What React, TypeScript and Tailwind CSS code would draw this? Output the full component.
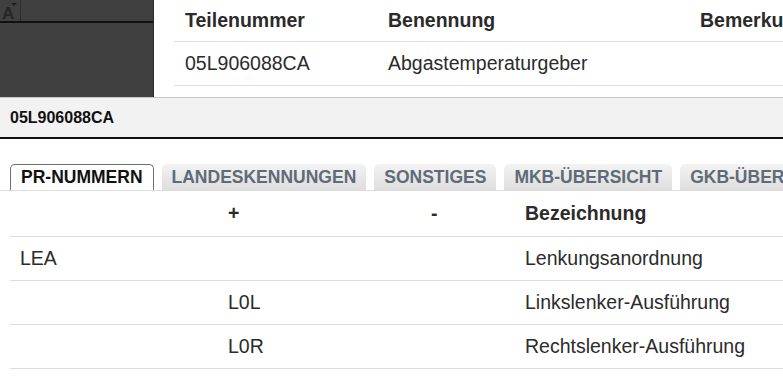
export default function App() {
  const tabs = ["LANDESKENNUNGEN", "SONSTIGES", "MKB-ÜBERSICHT", "GKB-ÜBERSICHT"];
  const rows = [
    { a: "LEA", b: "", c: "", d: "Lenkungsanordnung" },
    { a: "", b: "L0L", c: "", d: "Linkslenker-Ausführung" },
    { a: "", b: "L0R", c: "", d: "Rechtslenker-Ausführung" },
  ];

  return (
    <div className="w-[783px] h-[385px] overflow-hidden bg-white font-['Liberation_Sans',Arial,sans-serif] text-[#2b2b2b]">
      {/* top area */}
      <div className="flex h-[98px] border-b border-[#c8c8c8]">
        <div className="w-[154px] shrink-0 bg-[#404040] border-r border-[#2a2a2a]">
          <div className="flex h-[23px] border-b-2 border-[#111]">
            <div className="w-[21px] h-[21px] border-r border-[#2e2e2e] relative">
              <span className="absolute left-[2px] top-[5px] text-[17px] font-bold text-[#262626] leading-none">A</span>
              <span className="absolute top-[3px] right-[3px] w-0 h-0 border-l-[3px] border-r-[3px] border-t-[3px] border-l-transparent border-r-transparent border-t-[#1c1c1c]" />
            </div>
          </div>
        </div>
        <div className="flex-1 overflow-hidden pl-[20px]">
          <div className="w-[700px]">
            <div className="flex h-[42px] items-center border-b border-[#dcdcdc] text-[19.5px] font-bold">
              <div className="w-[203px] pl-[11px]">Teilenummer</div>
              <div className="w-[312px] pl-[11px]">Benennung</div>
              <div className="pl-[11px] whitespace-nowrap">Bemerku</div>
            </div>
            <div className="flex h-[44px] items-center border-b border-[#dcdcdc] text-[19.5px]">
              <div className="w-[203px] pl-[11px]">05L906088CA</div>
              <div className="w-[312px] pl-[11px]">Abgastemperaturgeber</div>
              <div className="pl-[11px]"></div>
            </div>
          </div>
        </div>
      </div>

      {/* title bar */}
      <div className="h-[41px] bg-[#f2f2f2] border-b-2 border-[#111] flex items-center pl-[10px] text-[16px] font-bold text-[#111]">
        05L906088CA
      </div>

      {/* tabs */}
      <div className="flex gap-[8px] pl-[10px] mt-[25px] border-b border-[#dcdcdc] whitespace-nowrap">
        <div className="h-[26px] px-[10px] flex items-center rounded-t-[5px] border border-b-0 border-[#6e6e6e] bg-white text-[17.5px] font-bold text-[#111]">
          PR-NUMMERN
        </div>
        {tabs.map((t) => (
          <div
            key={t}
            className="h-[26px] px-[10px] flex items-center rounded-t-[5px] bg-gradient-to-b from-[#f3f3f3] to-[#dedede] text-[17.5px] font-bold text-[#5f6b78]"
          >
            {t}
          </div>
        ))}
      </div>

      {/* pr table */}
      <div className="pl-[10px]">
        <div className="flex h-[46px] items-center border-b border-[#dcdcdc] text-[19.5px] font-bold">
          <div className="w-[208px] pl-[10px]"></div>
          <div className="w-[203px] pl-[10px]">+</div>
          <div className="w-[94px] pl-[10px]">-</div>
          <div className="pl-[10px]">Bezeichnung</div>
        </div>
        {rows.map((r, i) => (
          <div key={i} className="flex h-[44px] items-center border-b border-[#dcdcdc] text-[19.5px]">
            <div className="w-[208px] pl-[10px]">{r.a}</div>
            <div className="w-[203px] pl-[10px]">{r.b}</div>
            <div className="w-[94px] pl-[10px]">{r.c}</div>
            <div className="pl-[10px]">{r.d}</div>
          </div>
        ))}
      </div>
    </div>
  );
}
